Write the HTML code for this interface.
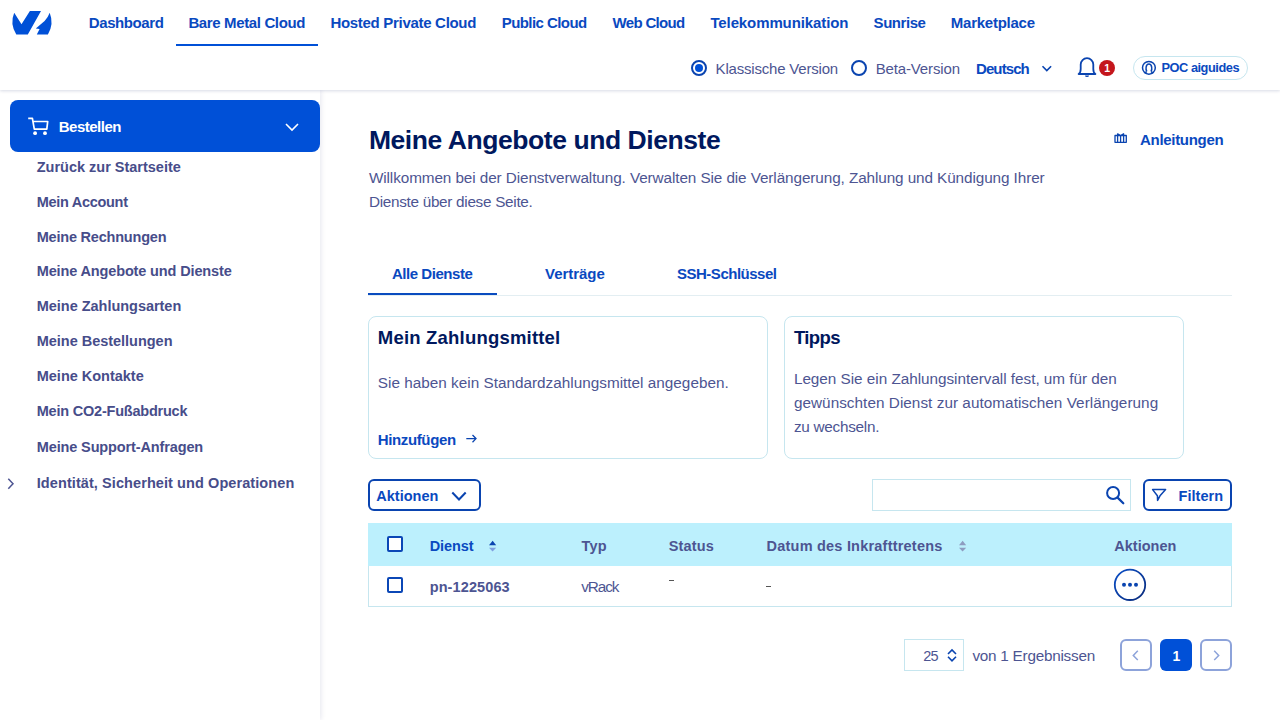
<!DOCTYPE html>
<html><head><meta charset="utf-8"><title>Meine Angebote und Dienste</title><style>
*{margin:0;padding:0}
html,body{width:1280px;height:720px;overflow:hidden;background:#fff;font-family:"Liberation Sans",sans-serif}
.t{position:absolute;white-space:nowrap;font-family:"Liberation Sans",sans-serif}
#hdr{position:absolute;left:0;top:0;width:1280px;height:90px;background:#fff;box-shadow:0 1px 3px rgba(0,24,94,.16)}
#side{position:absolute;left:0;top:90px;width:320px;height:630px;background:#fff;box-shadow:1px 0 5px rgba(0,24,94,.10)}
#ov{position:absolute;left:0;top:0}
</style></head><body>
<div id="side"></div>
<div id="hdr"></div>
<div class="t" style="left:88.80px;top:15.30px;font-size:15px;line-height:15px;letter-spacing:-0.412px;font-weight:700;color:#0a49c0;">Dashboard</div>
<div class="t" style="left:188.40px;top:15.30px;font-size:15px;line-height:15px;letter-spacing:-0.367px;font-weight:700;color:#0a49c0;">Bare Metal Cloud</div>
<div class="t" style="left:330.40px;top:15.30px;font-size:15px;line-height:15px;letter-spacing:-0.300px;font-weight:700;color:#0a49c0;">Hosted Private Cloud</div>
<div class="t" style="left:501.70px;top:15.30px;font-size:15px;line-height:15px;letter-spacing:-0.564px;font-weight:700;color:#0a49c0;">Public Cloud</div>
<div class="t" style="left:612.50px;top:15.30px;font-size:15px;line-height:15px;letter-spacing:-0.662px;font-weight:700;color:#0a49c0;">Web Cloud</div>
<div class="t" style="left:710.40px;top:15.30px;font-size:15px;line-height:15px;letter-spacing:-0.106px;font-weight:700;color:#0a49c0;">Telekommunikation</div>
<div class="t" style="left:873.60px;top:15.30px;font-size:15px;line-height:15px;letter-spacing:-0.450px;font-weight:700;color:#0a49c0;">Sunrise</div>
<div class="t" style="left:950.80px;top:15.30px;font-size:15px;line-height:15px;letter-spacing:-0.250px;font-weight:700;color:#0a49c0;">Marketplace</div>
<div style="position:absolute;left:176px;top:44px;width:142px;height:2px;box-sizing:border-box;background:#0050d7"></div>
<div class="t" style="left:715.60px;top:61.40px;font-size:15px;line-height:15px;letter-spacing:-0.194px;font-weight:400;color:#4d5592;">Klassische Version</div>
<div class="t" style="left:875.70px;top:61.40px;font-size:15px;line-height:15px;letter-spacing:-0.145px;font-weight:400;color:#4d5592;">Beta-Version</div>
<div class="t" style="left:976.00px;top:61.40px;font-size:15px;line-height:15px;letter-spacing:-0.900px;font-weight:700;color:#0a49c0;">Deutsch</div>
<div style="position:absolute;left:1098.8px;top:59.9px;width:16px;height:16px;box-sizing:border-box;border-radius:50%;background:#c4161c"></div>
<div class="t" style="left:1104.30px;top:62.91px;font-size:10.5px;line-height:10.5px;letter-spacing:0.000px;font-weight:700;color:#fff;">1</div>
<div style="position:absolute;left:1133px;top:56px;width:115px;height:24px;box-sizing:border-box;border:1px solid #c6e6ef;border-radius:12px"></div>
<div class="t" style="left:1161.50px;top:62.06px;font-size:12.8px;line-height:12.8px;letter-spacing:-0.473px;font-weight:700;color:#0a49c0;">POC aiguides</div>
<div style="position:absolute;left:10px;top:100px;width:310px;height:52px;box-sizing:border-box;background:#0050d7;border-radius:8px"></div>
<div class="t" style="left:58.70px;top:119.30px;font-size:15px;line-height:15px;letter-spacing:-0.488px;font-weight:700;color:#fff;">Bestellen</div>
<div class="t" style="left:36.75px;top:159.93px;font-size:14.5px;line-height:14.5px;letter-spacing:-0.010px;font-weight:700;color:#474d8a;">Zurück zur Startseite</div>
<div class="t" style="left:36.75px;top:194.73px;font-size:14.5px;line-height:14.5px;letter-spacing:-0.300px;font-weight:700;color:#474d8a;">Mein Account</div>
<div class="t" style="left:36.75px;top:229.53px;font-size:14.5px;line-height:14.5px;letter-spacing:-0.213px;font-weight:700;color:#474d8a;">Meine Rechnungen</div>
<div class="t" style="left:36.75px;top:264.33px;font-size:14.5px;line-height:14.5px;letter-spacing:-0.140px;font-weight:700;color:#474d8a;">Meine Angebote und Dienste</div>
<div class="t" style="left:36.75px;top:299.23px;font-size:14.5px;line-height:14.5px;letter-spacing:-0.028px;font-weight:700;color:#474d8a;">Meine Zahlungsarten</div>
<div class="t" style="left:36.75px;top:334.23px;font-size:14.5px;line-height:14.5px;letter-spacing:-0.024px;font-weight:700;color:#474d8a;">Meine Bestellungen</div>
<div class="t" style="left:36.75px;top:369.03px;font-size:14.5px;line-height:14.5px;letter-spacing:-0.015px;font-weight:700;color:#474d8a;">Meine Kontakte</div>
<div class="t" style="left:36.75px;top:403.93px;font-size:14.5px;line-height:14.5px;letter-spacing:-0.217px;font-weight:700;color:#474d8a;">Mein CO2-Fußabdruck</div>
<div class="t" style="left:36.75px;top:439.53px;font-size:14.5px;line-height:14.5px;letter-spacing:-0.129px;font-weight:700;color:#474d8a;">Meine Support-Anfragen</div>
<div class="t" style="left:36.75px;top:476.43px;font-size:14.5px;line-height:14.5px;letter-spacing:0.081px;font-weight:700;color:#474d8a;">Identität, Sicherheit und Operationen</div>
<div class="t" style="left:368.90px;top:126.67px;font-size:26.5px;line-height:26.5px;letter-spacing:-0.436px;font-weight:700;color:#00185e;">Meine Angebote und Dienste</div>
<div class="t" style="left:368.90px;top:170.25px;font-size:15.3px;line-height:15.3px;letter-spacing:-0.092px;font-weight:400;color:#4d5592;">Willkommen bei der Dienstverwaltung. Verwalten Sie die Verlängerung, Zahlung und Kündigung Ihrer</div>
<div class="t" style="left:368.90px;top:194.25px;font-size:15.3px;line-height:15.3px;letter-spacing:-0.292px;font-weight:400;color:#4d5592;">Dienste über diese Seite.</div>
<div class="t" style="left:1140.00px;top:131.60px;font-size:15px;line-height:15px;letter-spacing:-0.300px;font-weight:700;color:#0a49c0;">Anleitungen</div>
<div class="t" style="left:392.00px;top:265.50px;font-size:15px;line-height:15px;letter-spacing:-0.464px;font-weight:700;color:#0a49c0;">Alle Dienste</div>
<div class="t" style="left:545.00px;top:265.50px;font-size:15px;line-height:15px;letter-spacing:-0.029px;font-weight:700;color:#0a49c0;">Verträge</div>
<div class="t" style="left:677.00px;top:265.50px;font-size:15px;line-height:15px;letter-spacing:-0.492px;font-weight:700;color:#0a49c0;">SSH-Schlüssel</div>
<div style="position:absolute;left:368px;top:295px;width:864px;height:1px;box-sizing:border-box;background:#e3eef2"></div>
<div style="position:absolute;left:368px;top:293px;width:129px;height:2px;box-sizing:border-box;background:#0a4bbf"></div>
<div style="position:absolute;left:368px;top:316px;width:400px;height:143px;box-sizing:border-box;border:1px solid #c6e6ef;border-radius:8px"></div>
<div style="position:absolute;left:784px;top:316px;width:400px;height:143px;box-sizing:border-box;border:1px solid #c6e6ef;border-radius:8px"></div>
<div class="t" style="left:377.80px;top:329.24px;font-size:18.5px;line-height:18.5px;letter-spacing:0.200px;font-weight:700;color:#00185e;">Mein Zahlungsmittel</div>
<div class="t" style="left:377.80px;top:375.05px;font-size:15.3px;line-height:15.3px;letter-spacing:0.011px;font-weight:400;color:#4d5592;">Sie haben kein Standardzahlungsmittel angegeben.</div>
<div class="t" style="left:377.80px;top:431.90px;font-size:15px;line-height:15px;letter-spacing:-0.378px;font-weight:700;color:#0a49c0;">Hinzufügen</div>
<div class="t" style="left:793.90px;top:329.24px;font-size:18.5px;line-height:18.5px;letter-spacing:-0.600px;font-weight:700;color:#00185e;">Tipps</div>
<div class="t" style="left:793.90px;top:371.05px;font-size:15.3px;line-height:15.3px;letter-spacing:-0.023px;font-weight:400;color:#4d5592;">Legen Sie ein Zahlungsintervall fest, um für den</div>
<div class="t" style="left:793.90px;top:395.05px;font-size:15.3px;line-height:15.3px;letter-spacing:0.042px;font-weight:400;color:#4d5592;">gewünschten Dienst zur automatischen Verlängerung</div>
<div class="t" style="left:793.90px;top:419.05px;font-size:15.3px;line-height:15.3px;letter-spacing:-0.264px;font-weight:400;color:#4d5592;">zu wechseln.</div>
<div style="position:absolute;left:368px;top:479px;width:113px;height:32px;box-sizing:border-box;border:2px solid #0a44b0;border-radius:6px"></div>
<div class="t" style="left:376.30px;top:489.03px;font-size:14.5px;line-height:14.5px;letter-spacing:0.000px;font-weight:700;color:#0a49c0;">Aktionen</div>
<div style="position:absolute;left:872px;top:479px;width:259px;height:32px;box-sizing:border-box;border:1px solid #c6e6ef"></div>
<div style="position:absolute;left:1143px;top:479px;width:89px;height:32px;box-sizing:border-box;border:2px solid #0a44b0;border-radius:6px"></div>
<div class="t" style="left:1178.60px;top:489.03px;font-size:14.5px;line-height:14.5px;letter-spacing:0.033px;font-weight:700;color:#0a49c0;">Filtern</div>
<div style="position:absolute;left:368px;top:523px;width:864px;height:43px;box-sizing:border-box;background:#bcf0fd"></div>
<div style="position:absolute;left:368px;top:566px;width:864px;height:41px;box-sizing:border-box;border:1px solid #c6e6ef;border-top:0"></div>
<div style="position:absolute;left:387px;top:536px;width:16px;height:16px;box-sizing:border-box;border:2px solid #0b47b6;border-radius:2px;background:#fff"></div>
<div style="position:absolute;left:387px;top:577px;width:16px;height:16px;box-sizing:border-box;border:2px solid #0b47b6;border-radius:2px;background:#fff"></div>
<div class="t" style="left:429.70px;top:538.73px;font-size:14.5px;line-height:14.5px;letter-spacing:-0.060px;font-weight:700;color:#0a49c0;">Dienst</div>
<div class="t" style="left:581.60px;top:539.13px;font-size:14.5px;line-height:14.5px;letter-spacing:0.150px;font-weight:700;color:#4d5592;">Typ</div>
<div class="t" style="left:668.75px;top:539.13px;font-size:14.5px;line-height:14.5px;letter-spacing:0.140px;font-weight:700;color:#4d5592;">Status</div>
<div class="t" style="left:766.60px;top:539.13px;font-size:14.5px;line-height:14.5px;letter-spacing:0.213px;font-weight:700;color:#4d5592;">Datum des Inkrafttretens</div>
<div class="t" style="left:1114.20px;top:539.13px;font-size:14.5px;line-height:14.5px;letter-spacing:0.029px;font-weight:700;color:#4d5592;">Aktionen</div>
<div class="t" style="left:429.70px;top:579.53px;font-size:14.5px;line-height:14.5px;letter-spacing:0.111px;font-weight:700;color:#4d5592;">pn-1225063</div>
<div class="t" style="left:581.20px;top:579.25px;font-size:15.3px;line-height:15.3px;letter-spacing:-1.050px;font-weight:400;color:#4d5592;">vRack</div>
<div style="position:absolute;left:669px;top:580px;width:4.5px;height:1px;box-sizing:border-box;background:#555"></div>
<div style="position:absolute;left:766px;top:586px;width:4.5px;height:1px;box-sizing:border-box;background:#555"></div>
<div style="position:absolute;left:904px;top:639px;width:60px;height:32px;box-sizing:border-box;border:1px solid #c6e6ef"></div>
<div class="t" style="left:923.20px;top:648.93px;font-size:14.5px;line-height:14.5px;letter-spacing:-0.800px;font-weight:400;color:#4d5592;">25</div>
<div class="t" style="left:972.40px;top:648.25px;font-size:15.3px;line-height:15.3px;letter-spacing:-0.244px;font-weight:400;color:#4d5592;">von 1 Ergebnissen</div>
<div style="position:absolute;left:1120px;top:639px;width:32px;height:32px;box-sizing:border-box;border:2px solid #8da3da;border-radius:6px"></div>
<div style="position:absolute;left:1160px;top:639px;width:32px;height:32px;box-sizing:border-box;background:#0050d7;border-radius:6px"></div>
<div class="t" style="left:1172.50px;top:648.65px;font-size:14px;line-height:14px;letter-spacing:0.000px;font-weight:700;color:#fff;">1</div>
<div style="position:absolute;left:1200px;top:639px;width:32px;height:32px;box-sizing:border-box;border:2px solid #8da3da;border-radius:6px"></div>
<svg id="ov" width="1280" height="720" viewBox="0 0 1280 720"><defs><linearGradient id="g1" x1="0" y1="0" x2="1" y2="1"><stop offset="0" stop-color="#0a4fc8"/><stop offset="1" stop-color="#0a2a7a"/></linearGradient></defs><path fill="#0050d7" d="M14.2 12.8 L21.5 24.3 L29.9 11.1 L41 11.1 L27.8 34.5 L16.3 34.5 Q9.6 24 14.2 12.8Z M49.7 12.8 Q54.2 24 47.9 34.5 L36.8 34.5 L39.6 28.9 L35.8 28.6 L44.6 21 Q47.8 18 49.7 12.8Z"/><circle cx="699" cy="68" r="7" fill="none" stroke="#0a44b0" stroke-width="2"/><circle cx="699" cy="68" r="4" fill="#0050d7"/><circle cx="859" cy="68" r="7" fill="none" stroke="#0a44b0" stroke-width="2"/><path d="M1042.5 66.2 L1046.8 70.6 L1051.1 66.2" fill="none" stroke="#0a44b0" stroke-width="1.6"/><path d="M1078.6 74 L1095.4 74 Q1093.3 72.8 1093.3 69 L1093.3 64.5 A6.3 6.3 0 0 0 1080.7 64.5 L1080.7 69 Q1080.7 72.8 1078.6 74 Z" fill="none" stroke="#0a44b0" stroke-width="1.8" stroke-linejoin="round"/><path d="M1085 75.5 A2 1.6 0 0 0 1089 75.5 Z" fill="#0a44b0"/><circle cx="1148.9" cy="67.8" r="6.4" fill="none" stroke="#0a44b0" stroke-width="1.5"/><path d="M1146.8 71.4 C1145.5 69.6 1145.6 64 1148.9 64 C1152.2 64 1152.3 69.6 1151 71.4 M1146.8 71.4 L1144.6 73.4 M1151 71.4 L1153.2 73.4" fill="none" stroke="#0a44b0" stroke-width="1.5"/><path d="M28.2 118.4 L32.4 118.4 L34.3 129.1 L46.8 129.1 L47.7 121.5 L33.3 121.5" fill="none" stroke="#fff" stroke-width="1.7" stroke-linejoin="round"/><circle cx="35.1" cy="133.2" r="1.9" fill="#fff"/><circle cx="45" cy="133.2" r="1.9" fill="#fff"/><path d="M286 124 L292 130 L298 124" fill="none" stroke="#fff" stroke-width="1.6"/><path d="M8.3 478.8 L13 483.8 L8.3 488.8" fill="none" stroke="#4d5592" stroke-width="1.5"/><path d="M1115 135.5 L1115 142.3 L1126.3 142.3 L1126.3 135.5 Z M1117.6 142 L1117.6 133.8 L1120.6 135.6 L1123.6 133.8 L1123.6 142 M1120.6 135.6 L1120.6 142" fill="none" stroke="#0a44b0" stroke-width="1.3" stroke-linejoin="round"/><path d="M466.3 438.6 L476 438.6 M472.5 435 L476 438.6 L472.5 442.2" fill="none" stroke="#0a44b0" stroke-width="1.3"/><path d="M452.3 492.5 L459 499.5 L465.7 492.5" fill="none" stroke="#0a44b0" stroke-width="2"/><circle cx="1113.1" cy="493" r="6" fill="none" stroke="#0a44b0" stroke-width="2"/><path d="M1117.6 497.6 L1123.3 503.3" stroke="#0a44b0" stroke-width="2.2" stroke-linecap="round"/><path d="M1152.6 489.6 L1165.6 489.6 L1160 495.8 L1157.6 500.4 L1157.4 495.8 Z" fill="none" stroke="#0a44b0" stroke-width="1.5" stroke-linejoin="round"/><path d="M492.6 540.8 L496.2 545.3 L489 545.3Z" fill="#0a44b0"/><path d="M492.6 551.6 L496.2 547.7 L489 547.7Z" fill="#7f9fe0"/><path d="M962.6 540.8 L966.2 545.3 L959 545.3Z" fill="#8e9cc0"/><path d="M962.6 551.6 L966.2 547.7 L959 547.7Z" fill="#8e9cc0"/><circle cx="1130" cy="584.8" r="15.2" fill="none" stroke="url(#g1)" stroke-width="1.8"/><circle cx="1124" cy="584.8" r="2" fill="#0a44b0"/><circle cx="1130" cy="584.8" r="2" fill="#0a44b0"/><circle cx="1136" cy="584.8" r="2" fill="#0a44b0"/><path d="M948 654 L952 650 L956 654 M948 656.8 L952 660.8 L956 656.8" fill="none" stroke="#0a44b0" stroke-width="1.6"/><path d="M1137.8 650.8 L1133.3 655.4 L1137.8 660" fill="none" stroke="#8da3da" stroke-width="1.5"/><path d="M1214.2 650.8 L1218.7 655.4 L1214.2 660" fill="none" stroke="#8da3da" stroke-width="1.5"/></svg>
</body></html>
